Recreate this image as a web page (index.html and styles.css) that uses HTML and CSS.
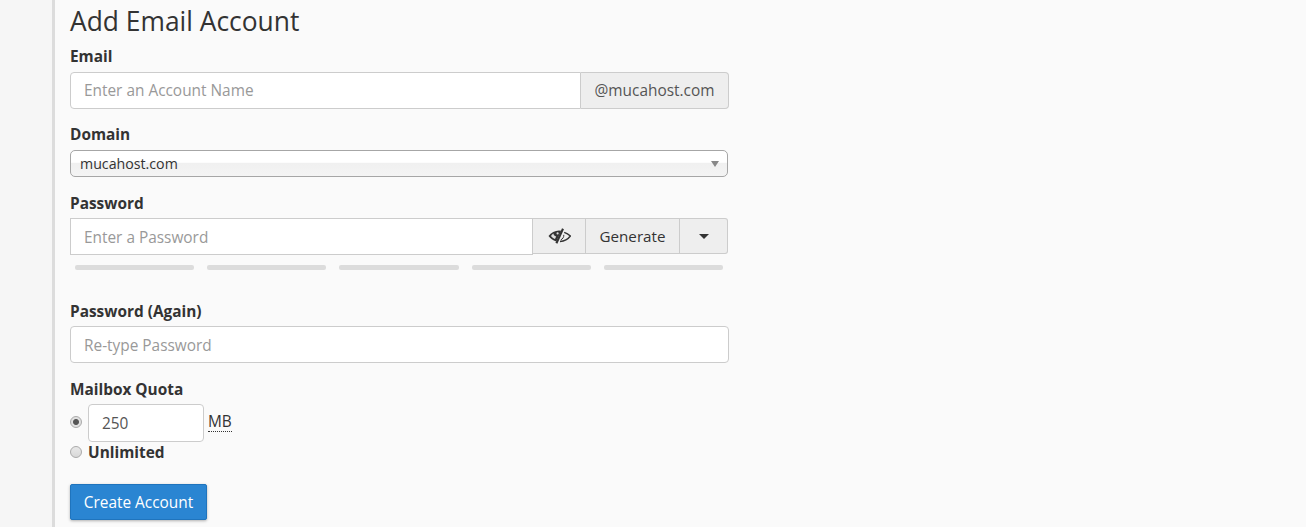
FILE: index.html
```html
<!DOCTYPE html>
<html lang="en">

<head>
    <meta charset="UTF-8" />
    <title>Add Email Account</title>
    <link rel="stylesheet" href="styles.css">
</head>

<body>
    <div class="sidebar"></div>

    <main class="content">
        <h2 class="title">Add Email Account</h2>

        <form class="account-form">
            <div class="field field-email">
                <label for="account">Email</label>
                <div class="input-group">
                    <input id="account" type="text" placeholder="Enter an Account Name">
                    <span class="addon">@mucahost.com</span>
                </div>
            </div>

            <div class="field field-domain">
                <label>Domain</label>
                <div class="fake-select">
                    <span>mucahost.com</span>
                    <i class="select-arrow"></i>
                </div>
            </div>

            <div class="field field-password">
                <label for="pass">Password</label>
                <div class="input-group">
                    <input id="pass" type="text" placeholder="Enter a Password">
                    <button type="button" class="addon-btn btn-eye">
                        <svg width="23" height="16" viewBox="0 0 23 16">
                            <path d="M0.5 8C3 4.6 7 2.6 11 2.5L13.2 2.8L8.3 13.4C4.9 12.6 2.4 10.4 0.5 8Z" fill="#333" />
                            <path d="M3 8C4 9.3 5.4 10.4 7 11L8.2 8.4C6.4 8.2 5.4 6.9 5.5 5.6C4.5 6.2 3.7 7 3 8Z" fill="#ddd" />
                            <circle cx="9.6" cy="5.4" r="1.1" fill="#ddd" />
                            <path d="M15 0.8L8.4 15.2" stroke="#333" stroke-width="2.1" fill="none" />
                            <path d="M16.2 4.4C18.6 5.2 20.6 6.4 22.4 8C20 11.2 16.4 13.2 12 13.5" stroke="#333" stroke-width="1.4" fill="none" />
                            <path d="M15.8 6.8C16 9 14.8 11 12.8 11.8" stroke="#333" stroke-width="1" fill="none" />
                        </svg>
                    </button>
                    <button type="button" class="addon-btn btn-generate">Generate</button>
                    <button type="button" class="addon-btn btn-caret"><i class="caret"></i></button>
                </div>
                <div class="strength">
                    <span></span><span></span><span></span><span></span><span></span>
                </div>
            </div>

            <div class="field field-again">
                <label for="again">Password (Again)</label>
                <input id="again" type="text" placeholder="Re-type Password">
            </div>

            <div class="field field-quota">
                <label>Mailbox Quota</label>
                <div class="quota-row">
                    <i class="radio radio-on"></i>
                    <input class="quota-input" type="text" value="250">
                    <abbr class="unit">MB</abbr>
                </div>
                <div class="unlimited-row">
                    <i class="radio"></i>
                    <b>Unlimited</b>
                </div>
            </div>

            <button type="button" class="btn-create">Create Account</button>
        </form>
    </main>
</body>

</html>
```

FILE: styles.css
```css
* {
    margin: 0;
    padding: 0;
    box-sizing: border-box;
}

body {
    display: flex;
    height: 527px;
    overflow: hidden;
    font-family: "Open Sans", sans-serif;
    font-size: 15.4px;
    color: #333;
    background-color: #fafafa;
}

.sidebar {
    width: 55px;
    flex-shrink: 0;
    background-color: #f6f6f6;
    border-right: 3px solid #dcdcdc;
}

.content {
    padding-left: 15px;
    width: 674px;
}

.title {
    font-size: 26.4px;
    font-weight: 400;
    line-height: 36px;
    margin-top: 3px;
}

.account-form {
    margin-top: 7px;
}

label {
    display: block;
    font-weight: 700;
    line-height: 20px;
    padding-top: 1px;
    margin-bottom: 4px;
}

.field-email label,
.field-domain label {
    margin-bottom: 5px;
}

input {
    font-family: "Open Sans", sans-serif;
    font-size: 15.4px;
    color: #555;
    height: 37px;
    padding: 0 13px;
    width: 100%;
    border: 1px solid #ccc;
    border-radius: 4px;
    background-color: #fff;
    outline: none;
}

#pass,
#again {
    padding-top: 2px;
}

input::placeholder {
    color: #999;
    opacity: 1;
}

.input-group {
    display: flex;
}

.input-group input {
    flex: 1;
    min-width: 0;
    border-radius: 4px 0 0 4px;
}

.addon {
    width: 148px;
    height: 37px;
    line-height: 35px;
    text-align: center;
    color: #555;
    background-color: #eee;
    border: 1px solid #ccc;
    border-left: none;
    border-radius: 0 4px 4px 0;
}

.field-domain {
    margin-top: 15px;
}

.fake-select {
    position: relative;
    width: 658px;
    height: 27px;
    padding-left: 9px;
    font-size: 14.2px;
    line-height: 26px;
    border: 1px solid #a6a6a6;
    border-radius: 5px;
    background: linear-gradient(#fff 0, #fff 45%, #f0f0f0 50%, #f4f4f4 100%);
}

.select-arrow {
    position: absolute;
    right: 8px;
    top: 10px;
    border-left: 4px solid transparent;
    border-right: 4px solid transparent;
    border-top: 6px solid #888;
}

.field-password {
    margin-top: 16px;
}

.field-password .input-group {
    width: 658px;
}

.field-password .input-group input {
    border-radius: 0;
}

.addon-btn {
    height: 36px;
    font-family: "Open Sans", sans-serif;
    font-size: 15.2px;
    color: #333;
    background-color: #eee;
    border: 1px solid #ccc;
    border-left: none;
    display: flex;
    align-items: center;
    justify-content: center;
}

.btn-eye {
    width: 53px;
}

.btn-generate {
    width: 94px;
}

.btn-caret {
    width: 48px;
    border-radius: 0 3px 3px 0;
}

.caret {
    border-left: 5px solid transparent;
    border-right: 5px solid transparent;
    border-top: 5px solid #333;
}

.strength {
    display: flex;
    gap: 13px;
    padding: 10px 5px 0;
    width: 658px;
}

.strength span {
    flex: 1;
    height: 5px;
    border-radius: 2px;
    background-color: #dcdcdc;
}

.field-again {
    margin-top: 31px;
}

.field-quota {
    margin-top: 16px;
}

.quota-row {
    display: flex;
    align-items: flex-start;
}

.radio {
    display: block;
    width: 12px;
    height: 12px;
    margin-right: 6px;
    flex-shrink: 0;
    border: 1px solid #aaa;
    border-radius: 50%;
    background: linear-gradient(#e8e8e8, #d8d8d8);
}

.quota-row .radio {
    margin-top: 12px;
}

.radio-on {
    background: radial-gradient(circle, #555 0, #555 2.5px, #e0e0e0 3.5px);
}

.quota-input {
    width: 116px;
    height: 38px;
}

.unit {
    margin: 9px 0 0 4px;
    line-height: 18px;
    border-bottom: 1px dotted #333;
}

.unlimited-row {
    display: flex;
    align-items: center;
    height: 20px;
}

.btn-create {
    display: block;
    width: 137px;
    height: 36px;
    margin-top: 22px;
    font-family: "Open Sans", sans-serif;
    font-size: 15.4px;
    color: #fff;
    background-color: #2a85d2;
    border: 1px solid #1f74bd;
    border-radius: 2px;
    box-shadow: 0 1px 3px rgba(0, 0, 0, 0.3);
}
```
